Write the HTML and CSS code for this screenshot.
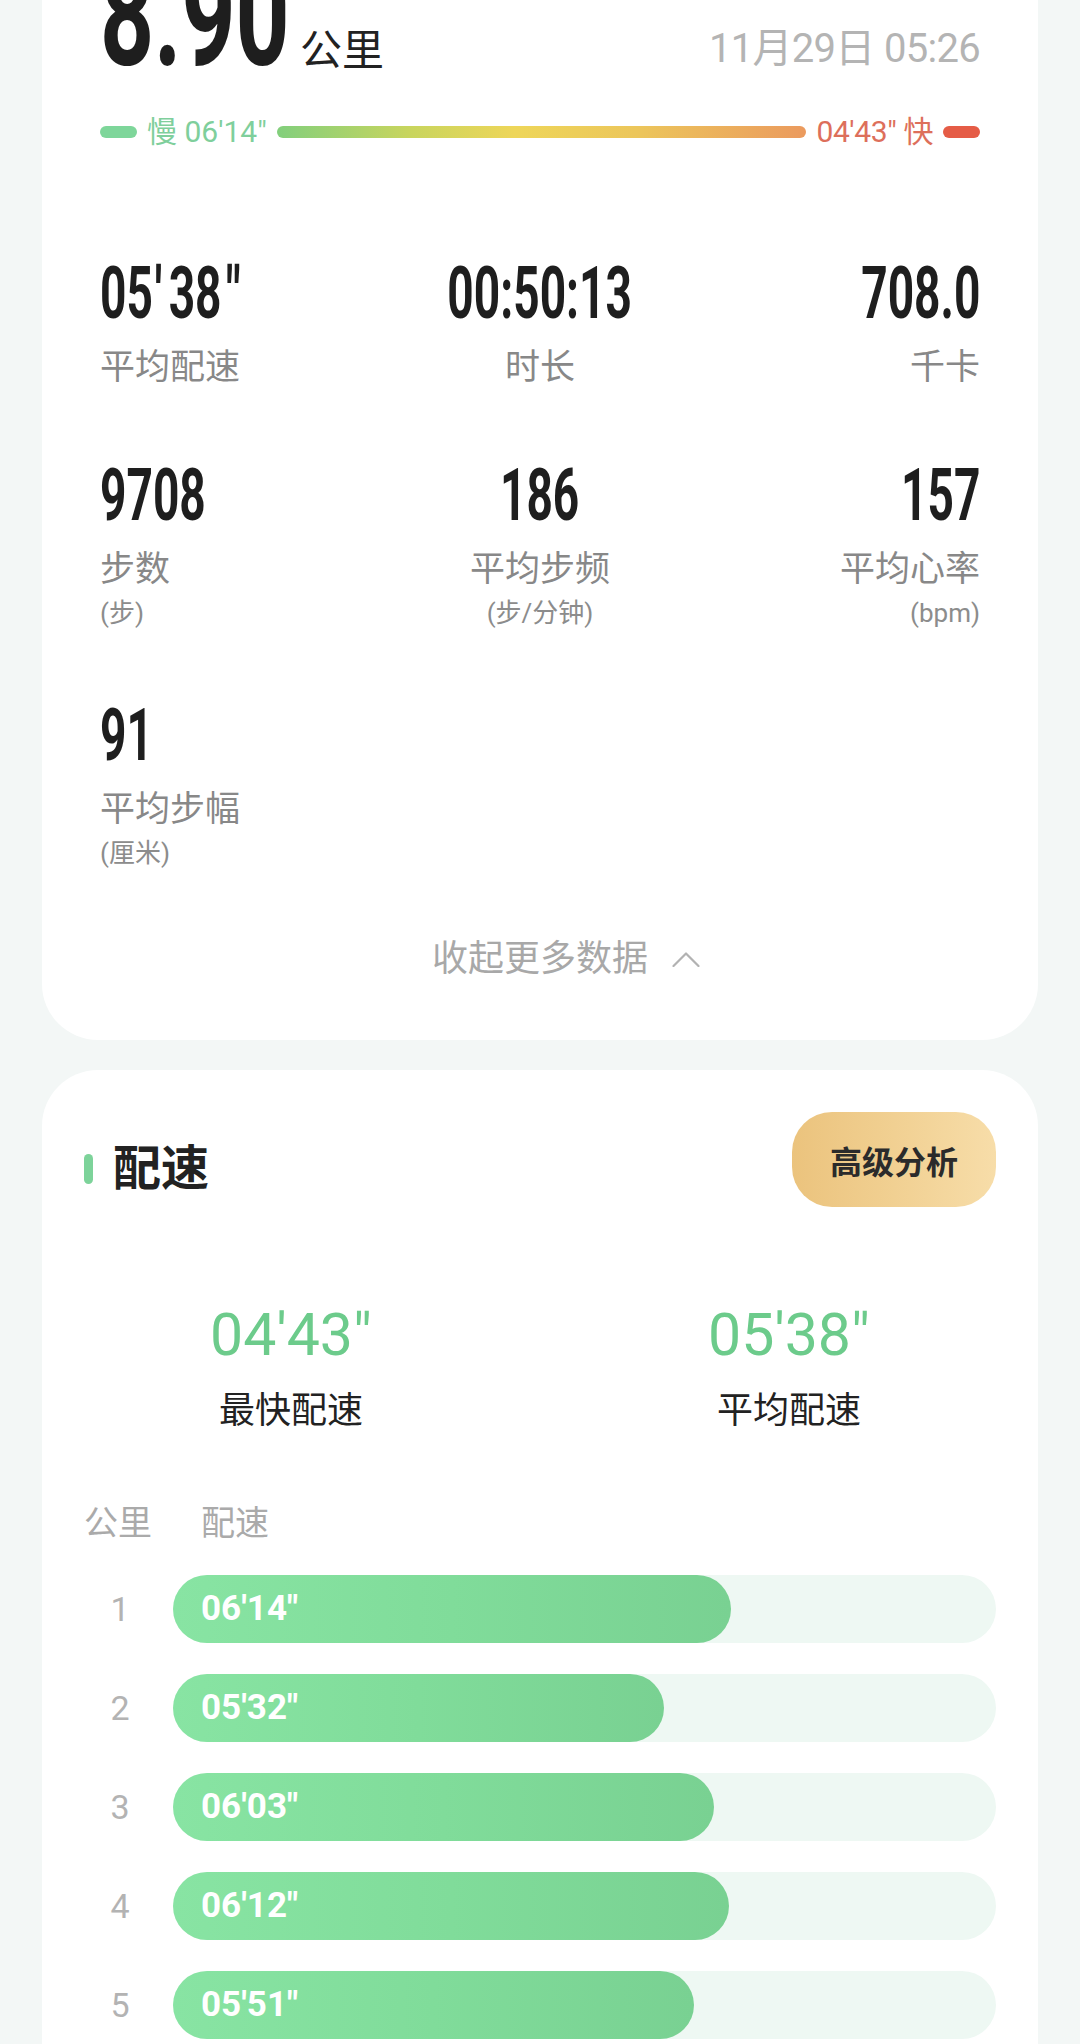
FILE: index.html
```html
<!DOCTYPE html>
<html lang="zh-CN">
<head>
    <meta charset="UTF-8">
    <meta name="viewport" content="width=device-width, initial-scale=1.0">
    <title>跑步详情</title>
    <link rel="stylesheet" href="styles.css">
</head>
<body>
    <div class="screen">
        <div class="card summary-card">
            <div class="distance-row">
                <div class="distance">
                    <span class="distance-value">8.90</span>
                    <span class="distance-unit">公里</span>
                </div>
                <div class="run-date">11月29日 05:26</div>
            </div>

            <div class="pace-range">
                <span class="range-cap slow"></span>
                <span class="range-label slow">慢 06'14"</span>
                <span class="range-bar"></span>
                <span class="range-label fast">04'43" 快</span>
                <span class="range-cap fast"></span>
            </div>

            <div class="stats">
                <div class="stat">
                    <div class="stat-value">05<span class="min-mark">'</span>38<span class="sec-mark">"</span></div>
                    <div class="stat-label">平均配速</div>
                </div>
                <div class="stat">
                    <div class="stat-value">00:50:13</div>
                    <div class="stat-label">时长</div>
                </div>
                <div class="stat">
                    <div class="stat-value">708.0</div>
                    <div class="stat-label">千卡</div>
                </div>
                <div class="stat">
                    <div class="stat-value">9708</div>
                    <div class="stat-label">步数</div>
                    <div class="stat-unit">(步)</div>
                </div>
                <div class="stat">
                    <div class="stat-value">186</div>
                    <div class="stat-label">平均步频</div>
                    <div class="stat-unit">(步/分钟)</div>
                </div>
                <div class="stat">
                    <div class="stat-value">157</div>
                    <div class="stat-label">平均心率</div>
                    <div class="stat-unit">(bpm)</div>
                </div>
                <div class="stat">
                    <div class="stat-value">91</div>
                    <div class="stat-label">平均步幅</div>
                    <div class="stat-unit">(厘米)</div>
                </div>
            </div>

            <div class="collapse">
                <span>收起更多数据</span>
                <svg class="chevron" width="28" height="15" viewBox="0 0 28 15">
                    <polyline points="1.5,14 14,1.5 26.5,14" fill="none" stroke="#b2b2b2" stroke-width="2.2" stroke-linecap="round" stroke-linejoin="round"/>
                </svg>
            </div>
        </div>

        <div class="card pace-card">
            <div class="pace-header">
                <div class="section-title">
                    <span class="title-mark"></span>
                    <h2>配速</h2>
                </div>
                <button class="analysis-btn">高级分析</button>
            </div>

            <div class="pace-summary">
                <div class="pace-item">
                    <div class="pace-value">04'43"</div>
                    <div class="pace-label">最快配速</div>
                </div>
                <div class="pace-item">
                    <div class="pace-value">05'38"</div>
                    <div class="pace-label">平均配速</div>
                </div>
            </div>

            <div class="split-row split-head">
                <span>公里</span>
                <span class="split-head-pace">配速</span>
            </div>

            <div class="splits">
                <div class="split-row">
                    <span class="split-km">1</span>
                    <div class="split-track"><div class="split-fill" style="width: 67.8%">06'14"</div></div>
                </div>
                <div class="split-row">
                    <span class="split-km">2</span>
                    <div class="split-track"><div class="split-fill" style="width: 59.6%">05'32"</div></div>
                </div>
                <div class="split-row">
                    <span class="split-km">3</span>
                    <div class="split-track"><div class="split-fill" style="width: 65.7%">06'03"</div></div>
                </div>
                <div class="split-row">
                    <span class="split-km">4</span>
                    <div class="split-track"><div class="split-fill" style="width: 67.5%">06'12"</div></div>
                </div>
                <div class="split-row">
                    <span class="split-km">5</span>
                    <div class="split-track"><div class="split-fill" style="width: 63.3%">05'51"</div></div>
                </div>
            </div>
        </div>
    </div>
</body>
</html>
```

FILE: styles.css
```css
body {
    margin: 0;
    font-family: Roboto, "Noto Sans CJK SC", sans-serif;
    color: #222;
    background-color: #f3f7f6;
}
.screen {
    height: 2044px;
    overflow: hidden;
    padding: 0 42px;
}
.card {
    background-color: #fff;
    border-radius: 56px;
}

/* summary card */
.summary-card {
    margin-top: -96px;
    padding: 40px 58px 60px;
}
.distance-row {
    display: flex;
    justify-content: space-between;
    align-items: baseline;
}
.distance {
    display: flex;
    align-items: baseline;
}
.distance-value {
    display: block;
    width: 184px;
    font-size: 144px;
    font-weight: 700;
    line-height: 144px;
    white-space: nowrap;
    color: #1e1e1e;
    transform: scaleX(0.655);
    transform-origin: left center;
}
.distance-unit {
    margin-left: 16px;
    font-size: 42px;
    line-height: 1;
    color: #222;
}
.run-date {
    font-size: 40px;
    line-height: 1;
    letter-spacing: -0.7px;
    color: #b4b4b4;
    transform: translateY(-3px);
}
.pace-range {
    display: flex;
    align-items: center;
    gap: 10px;
    height: 36px;
    margin-top: 26px;
}
.range-cap {
    width: 37px;
    height: 12px;
    border-radius: 6px;
}
.range-cap.slow {
    background-color: #7ed69a;
}
.range-cap.fast {
    background-color: #e55c46;
}
.range-label {
    font-size: 30px;
    line-height: 36px;
    white-space: nowrap;
}
.range-label.slow {
    color: #7fcf9c;
}
.range-label.fast {
    color: #dd6f5b;
    letter-spacing: -0.4px;
}
.range-bar {
    flex: 1;
    height: 12px;
    border-radius: 6px;
    background: linear-gradient(90deg, #82cf7c 0%, #c8d55e 25%, #eed659 45%, #ecc65b 68%, #eb9a5e 100%);
}
.stats {
    display: grid;
    grid-template-columns: 1fr 1fr 1fr;
    row-gap: 71px;
    margin-top: 108px;
}
.stat:nth-child(3n+2) {
    text-align: center;
}
.stat:nth-child(3n) {
    text-align: right;
}
.stat-value {
    font-size: 72px;
    font-weight: 700;
    line-height: 72px;
    white-space: nowrap;
    color: #1e1e1e;
    transform: scaleX(0.64);
    transform-origin: left center;
}
.stat:nth-child(3n+2) .stat-value {
    transform-origin: center center;
}
.stat:nth-child(3n) .stat-value {
    transform-origin: right center;
}
.min-mark {
    margin: 0 10px 0 3px;
}
.sec-mark {
    margin-left: 7px;
}
.stat-label {
    margin-top: 17px;
    font-size: 35px;
    line-height: 42px;
    color: #888;
}
.stat-unit {
    margin-top: 7px;
    font-size: 26px;
    line-height: 31px;
    color: #8c8c8c;
}
.collapse {
    display: flex;
    justify-content: center;
    align-items: center;
    gap: 24px;
    margin-top: 69px;
    padding-left: 52px;
    font-size: 36px;
    line-height: 42px;
    color: #a8a8a8;
}

/* pace card */
.pace-card {
    margin-top: 30px;
    padding: 42px 42px 60px;
}
.pace-header {
    display: flex;
    justify-content: space-between;
    align-items: center;
}
.section-title {
    display: flex;
    align-items: center;
    gap: 20px;
    margin-top: 19px;
}
.title-mark {
    width: 9px;
    height: 30px;
    border-radius: 5px;
    background-color: #7dd39a;
}
.section-title h2 {
    margin: 0;
    font-size: 48px;
    font-weight: 700;
    line-height: 58px;
    color: #222;
}
.analysis-btn {
    width: 204px;
    height: 95px;
    border: none;
    border-radius: 40px;
    padding: 0;
    background: linear-gradient(90deg, #ebc37d 0%, #f1d092 50%, #f7dda9 100%);
    font-family: Roboto, "Noto Sans CJK SC", sans-serif;
    font-size: 32px;
    font-weight: 700;
    color: #2b2b2b;
    cursor: pointer;
}
.pace-summary {
    display: grid;
    grid-template-columns: 1fr 1fr;
    margin: 98px -42px 0;
    text-align: center;
}
.pace-value {
    font-size: 59px;
    line-height: 59px;
    color: #6ccb8b;
}
.pace-label {
    margin-top: 26px;
    font-size: 36px;
    line-height: 43px;
    color: #222;
}
.split-row {
    display: grid;
    grid-template-columns: 72px 1fr;
    column-gap: 17px;
    align-items: center;
}
.split-head {
    margin-top: 70px;
    font-size: 34px;
    line-height: 41px;
    color: #aaa;
}
.split-head-pace {
    padding-left: 28px;
}
.splits {
    display: flex;
    flex-direction: column;
    gap: 31px;
    margin-top: 31px;
}
.split-km {
    font-size: 34px;
    text-align: center;
    color: #b3b3b3;
}
.split-track {
    height: 68px;
    border-radius: 34px;
    background-color: #eef8f3;
}
.split-fill {
    box-sizing: border-box;
    height: 68px;
    padding-left: 28px;
    border-radius: 34px;
    background: linear-gradient(90deg, #88e4a3 0%, #80dc9a 50%, #79d192 100%);
    font-size: 35px;
    font-weight: 700;
    line-height: 68px;
    color: #fff;
    white-space: nowrap;
}
```
